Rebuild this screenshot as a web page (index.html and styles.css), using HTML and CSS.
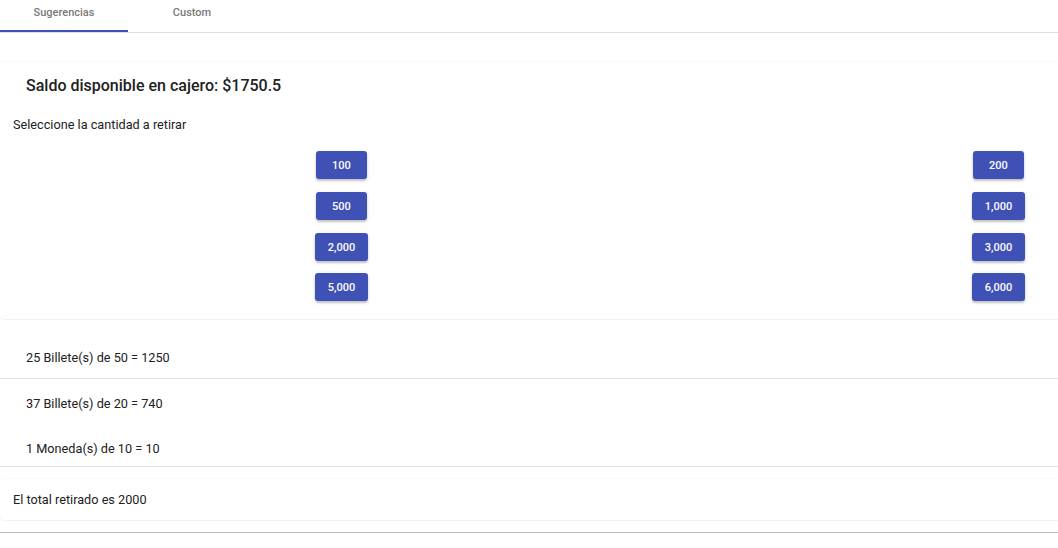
FILE: index.html
```html
<!DOCTYPE html>
<html lang="es">
<head>
<meta charset="utf-8">
<title>Cajero</title>
<link rel="stylesheet" href="styles.css">
</head>
<body>
<div class="page">
  <nav class="tabs">
    <div class="tab active">Sugerencias</div>
    <div class="tab">Custom</div>
  </nav>
  <section class="card main-card">
    <h2 class="card-title">Saldo disponible en cajero: $1750.5</h2>
    <p class="prompt">Seleccione la cantidad a retirar</p>
    <div class="amounts">
      <div class="cell"><button class="btn">100</button></div>
      <div class="cell"><button class="btn">200</button></div>
      <div class="cell"><button class="btn">500</button></div>
      <div class="cell"><button class="btn">1,000</button></div>
      <div class="cell"><button class="btn">2,000</button></div>
      <div class="cell"><button class="btn">3,000</button></div>
      <div class="cell"><button class="btn">5,000</button></div>
      <div class="cell"><button class="btn">6,000</button></div>
    </div>
  </section>
  <ul class="breakdown">
    <li class="item first">25 Billete(s) de 50 = 1250</li>
    <li class="item second">37 Billete(s) de 20 = 740</li>
    <li class="item third">1 Moneda(s) de 10 = 10</li>
  </ul>
  <section class="card total-card">
    <p class="total">El total retirado es 2000</p>
  </section>
  <div class="bottom-rule"></div>
</div>
</body>
</html>
```

FILE: styles.css
```css
html, body {
  margin: 0;
  padding: 0;
  background: #ffffff;
  overflow: hidden;
}
body {
  font-family: Roboto, "Liberation Sans", sans-serif;
  color: #212121;
  width: 1058px;
  height: 548px;
}
.page {
  display: flex;
  flex-direction: column;
  width: 1058px;
  overflow: hidden;
}
.tabs {
  display: flex;
  height: 32px;
  border-bottom: 1px solid #e0e0e0;
  box-sizing: content-box;
}
.tab {
  width: 128px;
  height: 32px;
  box-sizing: border-box;
  padding-top: 6px;
  text-align: center;
  font-size: 11px;
  color: #7a7a7a;
  font-weight: 500;
}
.tab.active {
  border-bottom: 2px solid #3f51b5;
}
.card {
  background: #fff;
  border-radius: 4px;
  box-shadow: 0 0 2px rgba(0,0,0,0.08), 0 1px 1px rgba(0,0,0,0.03);
  width: 1080px;
  flex-shrink: 0;
}
.main-card {
  margin-top: 29px;
  padding: 13px 13px 17px 13px;
  height: 257px;
  box-sizing: border-box;
}
.card-title {
  margin: 0 0 0 13px;
  font-size: 16px;
  font-weight: 500;
  line-height: 22px;
  color: #212121;
}
.prompt {
  margin: 19px 0 0 0;
  font-size: 12.7px;
  line-height: 18px;
}
.amounts {
  margin-top: 17px;
  display: grid;
  grid-template-columns: 657px 657px;
  grid-auto-rows: 28px;
  row-gap: 13px;
  width: 1314px;
}
.amounts .cell:nth-child(n+7) {
  margin-top: -1px;
}
.cell {
  display: flex;
  justify-content: center;
}
.btn {
  font-family: Roboto, "Liberation Sans", sans-serif;
  font-size: 11px;
  font-weight: 500;
  color: #fff;
  background: #3f51b5;
  border: none;
  border-radius: 3px;
  height: 28px;
  min-width: 51px;
  padding: 0 13px;
  box-shadow: 0 2px 2px rgba(0,0,0,0.18), 0 1px 4px rgba(0,0,0,0.1);
}
.breakdown {
  list-style: none;
  margin: 0;
  padding: 20px 0 0 0;
  border-bottom: 1px solid #e0e0e0;
  width: 1058px;
}
.item {
  font-size: 12.7px;
  line-height: 18px;
  padding: 0 26px;
}
.item.first {
  padding-top: 10px;
  padding-bottom: 11px;
}
.item.second {
  border-top: 1px solid #e0e0e0;
  padding-top: 16px;
  padding-bottom: 13px;
}
.item.third {
  padding-top: 14px;
  padding-bottom: 8px;
}
.total-card {
  margin-top: 12px;
  height: 41px;
  padding: 12px 13px;
  box-sizing: border-box;
}
.total {
  margin: 0;
  font-size: 12.7px;
  line-height: 18px;
}
.bottom-rule {
  margin-top: 12px;
  height: 1px;
  background: #bdbdbd;
  width: 1058px;
}
```
